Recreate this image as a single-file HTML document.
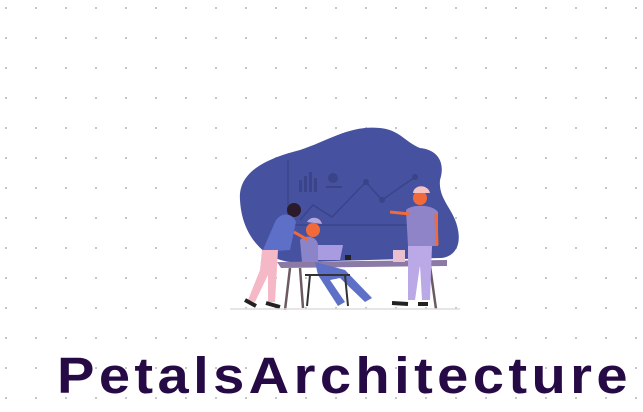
<!DOCTYPE html>
<html><head><meta charset="utf-8"><style>
html,body{margin:0;padding:0}
body{width:643px;height:412px;overflow:hidden;position:relative;background:#fff;
background-image:radial-gradient(circle,#b8b8b8 0.9px,transparent 1.1px);background-size:30px 30px;background-position:-9px -7px}
.t{position:absolute;left:57px;top:346px;font-family:"Liberation Sans",sans-serif;font-size:51px;font-weight:bold;color:#260a45;letter-spacing:4px;white-space:nowrap;line-height:60px;transform:scaleX(1.1);transform-origin:0 0}
svg{position:absolute;left:0;top:0}
</style></head><body>
<svg width="643" height="412" viewBox="0 0 643 412">
<path d="M240 200 C238 175 260 160 300 150 C330 140 350 125 380 128 C400 130 405 142 420 148 C440 150 445 165 440 180 C438 200 455 210 458 230 C462 250 450 258 440 258 L300 262 C270 265 242 240 240 200Z" fill="#4652a0"/>
<g stroke="#3a4489" stroke-width="1.5" fill="none">
<path d="M288 160 V225 H420"/>
<path d="M300 220 L313 205 L332 217 L366 182 L382 200 L415 177"/>
</g>
<g fill="#3a4489"><rect x="299" y="180" width="3" height="12"/><rect x="304" y="176" width="3" height="16"/><rect x="309" y="172" width="3" height="20"/><rect x="314" y="178" width="3" height="14"/><circle cx="333" cy="178" r="5"/><rect x="326" y="186" width="16" height="2"/><circle cx="366" cy="182" r="3"/><circle cx="382" cy="200" r="3"/><circle cx="415" cy="177" r="3"/></g>
<path d="M277 262 L447 260 L447 266 L281 268Z" fill="#8b7aa6"/>
<path d="M290 268 L285 310 M300 268 L303 308 M430 266 L436 309" stroke="#6b5a62" stroke-width="2.5"/>
<path d="M313 245 L343 245 L340 260 L308 260Z" fill="#a99be0"/>
<rect x="345" y="255" width="6" height="5" fill="#222"/>
<rect x="393" y="250" width="12" height="12" fill="#e8c0d0"/>
<circle cx="313" cy="230" r="7" fill="#f26a3a"/>
<path d="M307 222 C310 216 320 216 322 224Z" fill="#b7a5d8"/>
<path d="M300 240 C305 234 318 236 318 246 L318 262 L302 262Z" fill="#8c84c8"/>
<path d="M315 262 L345 270 L372 298 L365 302 L340 278 L330 280 L345 302 L338 306 L318 275Z" fill="#5e6fc7"/>
<path d="M305 275 L350 275 M310 275 L307 306 M345 275 L348 306" stroke="#333" stroke-width="2"/>
<circle cx="294" cy="210" r="7" fill="#2b1a2a"/>
<path d="M275 222 C280 212 292 212 296 222 L290 250 L262 252Z" fill="#5e6fc7"/>
<path d="M262 250 L278 250 L275 302 L268 302 L268 275 L255 302 L248 300 L260 270Z" fill="#f4b8c6"/>
<path d="M294 232 L308 240" stroke="#f26a3a" stroke-width="3"/>
<path d="M245 300 L256 306 M266 303 L280 307" stroke="#222" stroke-width="4"/>
<circle cx="420" cy="198" r="7" fill="#f26a3a"/>
<path d="M413 193 C414 184 428 184 430 193Z" fill="#f5c2c2"/>
<path d="M406 210 C412 204 432 204 438 212 L438 246 L408 246Z" fill="#8f84c7"/>
<path d="M408 246 L432 246 L430 300 L422 300 L420 265 L415 300 L408 300Z" fill="#bba8e6"/>
<path d="M410 214 L390 212" stroke="#f26a3a" stroke-width="3"/>
<path d="M436 214 L437 245" stroke="#f26a3a" stroke-width="3"/>
<path d="M392 303 L408 304 M418 304 L428 304" stroke="#222" stroke-width="4"/>
<path d="M230 309 L460 309" stroke="#ddd" stroke-width="1.5"/>
</svg>
<div class="t">PetalsArchitecture</div>
</body></html>
